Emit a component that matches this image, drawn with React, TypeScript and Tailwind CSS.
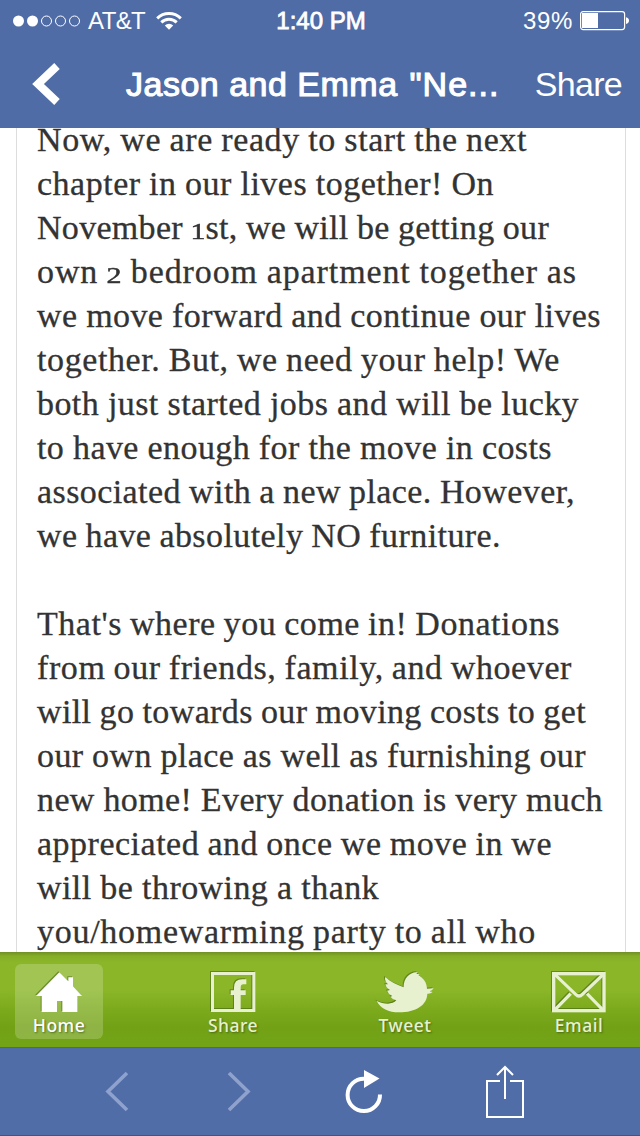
import React from 'react';

type Line = { text: string; width: number; tracking?: number };

const story: Line[][] = [
  [
    { text: 'Now, we are ready to start the next', width: 490, tracking: 0.6 },
    { text: 'chapter in our lives together! On', width: 457, tracking: 0.5 },
    { text: 'November 1st, we will be getting our', width: 512, tracking: 0.3 },
    { text: 'own 2 bedroom apartment together as', width: 540, tracking: 0.9 },
    { text: 'we move forward and continue our lives', width: 564 },
    { text: 'together. But, we need your help! We', width: 523, tracking: 0.6 },
    { text: 'both just started jobs and will be lucky', width: 542 },
    { text: 'to have enough for the move in costs', width: 515 },
    { text: 'associated with a new place. However,', width: 538 },
    { text: 'we have absolutely NO furniture.', width: 464 },
  ],
  [
    { text: "That's where you come in! Donations", width: 523, tracking: 0.55 },
    { text: 'from our friends, family, and whoever', width: 535, tracking: 0.6 },
    { text: 'will go towards our moving costs to get', width: 549, tracking: 0.38 },
    { text: 'our own place as well as furnishing our', width: 549 },
    { text: 'new home! Every donation is very much', width: 566, tracking: 0.38 },
    { text: 'appreciated and once we move in we', width: 515, tracking: 0.5 },
    { text: 'will be throwing a thank', width: 342 },
    { text: 'you/homewarming party to all who', width: 499, tracking: 0.72 },
  ],
];

function StoryLine({ text, width, tracking = 0.42 }: Line) {
  // old-style numerals sit at x-height
  const parts = text.split(/(\d)/);
  return (
    <span
      className="block whitespace-nowrap [text-align-last:justify]"
      style={{ width, letterSpacing: `${tracking}px` }}
    >
      {parts.map((part, i) =>
        /\d/.test(part) ? (
          <span key={i} className="mx-px inline-block scale-x-125 text-[24px] leading-none [-webkit-text-stroke:0.5px_#333333]">{part}</span>
        ) : (
          part
        )
      )}
    </span>
  );
}

function StatusBar() {
  return (
    <div className="flex h-10 items-center pt-px pl-[13px] pr-[11px] text-[24px] leading-none">
      <div className="flex flex-1 items-center">
        <svg width="68" height="12" viewBox="0 0 68 12" fill="none" stroke="white">
          <circle cx="5.5" cy="6" r="5.5" fill="white" stroke="none" />
          <circle cx="19.5" cy="6" r="5.5" fill="white" stroke="none" />
          <circle cx="33.5" cy="6" r="5" />
          <circle cx="47.5" cy="6" r="5" />
          <circle cx="61.5" cy="6" r="5" />
        </svg>
        <span className="ml-[7px] tracking-[-0.6px]">AT&amp;T</span>
        <svg className="ml-[11px]" width="26" height="18" viewBox="0 0 26 18" fill="none" stroke="white" strokeWidth="2.9">
          <path d="M1.2 6.4a16.7 16.7 0 0 1 23.6 0" />
          <path d="M5.3 10.4a10.9 10.9 0 0 1 15.4 0" />
          <path d="M13 17.8l-4.2-4.4a6 6 0 0 1 8.4 0z" fill="white" stroke="none" />
        </svg>
      </div>
      <span className="[-webkit-text-stroke:0.8px_white]">1:40 PM</span>
      <div className="flex flex-1 items-center justify-end">
        <span className="tracking-[0.7px]">39%</span>
        <svg className="ml-[7px]" width="49" height="20" viewBox="0 0 49 20" fill="none">
          <rect x="0.6" y="0.6" width="44" height="18" rx="2.5" stroke="white" strokeWidth="1.2" />
          <rect x="2" y="2" width="16" height="15" fill="white" />
          <path d="M46 6.2q3 .6 3 3.4t-3 3.4z" fill="white" />
        </svg>
      </div>
    </div>
  );
}

function NavBar() {
  return (
    <div className="flex h-[88px] items-center pl-[32px] pr-[18px] text-[34px] leading-none">
      <svg width="28" height="42" viewBox="0 0 28 42" fill="none" stroke="white" strokeWidth="8">
        <path d="M25 3L6 21l19 18" />
      </svg>
      <h1 className="ml-[66px] whitespace-nowrap tracking-[0.5px] [-webkit-text-stroke:1.1px_white]">
        Jason and Emma <span className="ml-[2px] tracking-[1px]">"Ne...</span>
      </h1>
      <span className="ml-auto tracking-[-0.7px]">Share</span>
    </div>
  );
}

function HomeIcon() {
  return (
    <svg width="46" height="41" viewBox="108 96 138 123" fill="currentColor">
      <path d="M178 97l27 27v-12h14v27l27 29h-14v48h-45v-33h-16v33h-46v-48h-17z" />
    </svg>
  );
}

function FacebookIcon() {
  return (
    <svg width="45" height="41" viewBox="92 96 135 123" fill="currentColor">
      <path fillRule="evenodd" d="M92 96h133v120H92zM101 105v102h60v-42h-10v-14h10v-8q0-25 25-25h12v15h-9q-8 0-8 10v8h15v14h-15v42h35V105z" />
    </svg>
  );
}

function BirdIcon() {
  return (
    <svg width="58" height="41" viewBox="83 91 174 123" fill="currentColor">
      <path d="M84 177C97 201 121 212 152 212C203 212 236 190 237 156Q246 157 253 151L244 149Q251 147 256 140L236 141C235 122 226 111 214 103L210 100L214 97L204 97L208 92C184 90 165 111 166 137C146 129 125 120 111 106Q107 118 119 128L111 128Q113 139 125 145L116 147Q120 158 132 163L126 165Q133 174 144 176C132 191 104 187 84 177z" />
    </svg>
  );
}

function MailIcon() {
  return (
    <svg width="54" height="41" viewBox="67 96 162 123" fill="none" stroke="currentColor" strokeWidth="10">
      <rect x="72" y="101" width="151" height="111" />
      <path d="M76 104l62 59q10 10 20 0l62-59M77 208l46-47M218 208l-46-47" />
    </svg>
  );
}

const tabs = [
  { label: 'Home', icon: <HomeIcon />, className: 'rounded-md bg-white/20 text-white' },
  { label: 'Share', icon: <FacebookIcon />, className: 'ml-[86px] text-[#e7f1cf]' },
  { label: 'Tweet', icon: <BirdIcon />, className: 'ml-[84px] text-[#e7f1cf]' },
  { label: 'Email', icon: <MailIcon />, className: 'ml-[86px] text-[#e7f1cf]' },
];

function ShareTabs() {
  return (
    <div className="flex h-[96px] border-b border-[#55732c] pl-[15px] pt-3 [background-image:linear-gradient(#708f24_0px,#84ae25_4px,#8bb629_10px,#8ab628_38px,#7dab1d_56px,#73a116_75px,#72a416_100%)]">
      {tabs.map((tab) => (
        <button key={tab.label} className={`flex h-[75px] w-[88px] flex-col items-center pt-[8px] ${tab.className}`}>
          <span className="drop-shadow-[-1px_-1px_0px_rgba(60,85,20,0.5)]">{tab.icon}</span>
          <span className="mt-[2px] font-['Noto_Sans'] text-[17.5px] font-medium leading-[20px] tracking-[0.5px] [text-shadow:1px_1px_2px_rgba(50,75,10,0.65)]">
            {tab.label}
          </span>
        </button>
      ))}
    </div>
  );
}

function BrowserToolbar() {
  return (
    <div className="flex h-[88px] items-start border-b border-[#3d5687] bg-[#506da7] text-white">
      <svg className="ml-[105px] mt-[23px] text-[#8fa2cd]" width="24" height="41" viewBox="0 0 24 41" fill="none" stroke="currentColor" strokeWidth="3.6">
        <path d="M22 2L3 20.5 22 39" />
      </svg>
      <svg className="ml-[98px] mt-[23px] text-[#8fa2cd]" width="24" height="41" viewBox="0 0 24 41" fill="none" stroke="currentColor" strokeWidth="3.6">
        <path d="M2 2l19 18.5L2 39" />
      </svg>
      <svg className="ml-[94px] mt-[21px]" width="38" height="45" viewBox="0 0 38 45" fill="none">
        <path d="M35 25.5A16.2 16.2 0 1 1 19 9.7" stroke="white" strokeWidth="4" />
        <path d="M19 1l15.5 8.5L19 19z" fill="white" />
      </svg>
      <svg className="ml-[103px] mt-[17px]" width="38" height="54" viewBox="0 0 38 54" fill="none" stroke="white" strokeWidth="2">
        <path d="M14 16H1v36h36V16H24M19 34V2M11 10l8-8 8 8" />
      </svg>
    </div>
  );
}

export default function App() {
  return (
    <div className="flex h-[1136px] w-[640px] flex-col overflow-hidden bg-white font-['Liberation_Sans',sans-serif]">
      <header className="h-32 shrink-0 bg-[#4f6ca6] text-white">
        <StatusBar />
        <NavBar />
      </header>
      <main className="min-h-0 flex-1 overflow-hidden px-4">
        <article className="-mt-[10px] h-[850px] w-[610px] border-x border-[#dddddd] pl-[20px] font-['Liberation_Serif',serif] text-[34px] leading-[44px] text-[#333333] [word-spacing:-1.2px] [-webkit-text-stroke:0.3px_#333333]">
          {story.map((paragraph, i) => (
            <p key={i} className="mb-[44px]">
              {paragraph.map((line) => (
                <StoryLine key={line.text} {...line} />
              ))}
            </p>
          ))}
        </article>
      </main>
      <footer className="shrink-0">
        <ShareTabs />
        <BrowserToolbar />
      </footer>
    </div>
  );
}
